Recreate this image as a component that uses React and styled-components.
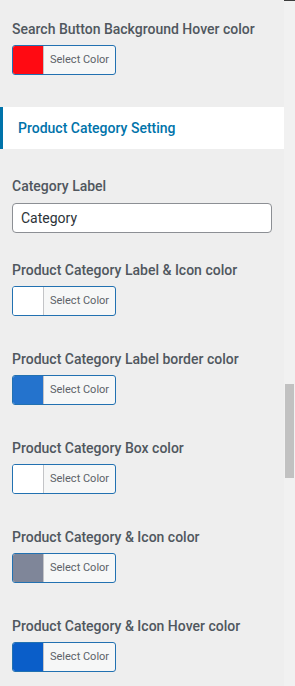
import React from 'react';
import styled, { createGlobalStyle } from 'styled-components';

const GlobalStyle = createGlobalStyle`
  body {
    margin: 0;
    background: #eeeeee;
    font-family: Roboto, "Liberation Sans", sans-serif;
  }
`;

const Layout = styled.div`
  display: flex;
  width: 295px;
  height: 686px;
  overflow: hidden;
`;

const Panel = styled.div`
  width: 284px;
  flex-shrink: 0;
  display: flex;
  flex-direction: column;
  padding-top: 19px;
  background: #eeeeee;
`;

const Gutter = styled.div`
  flex: 1;
  display: flex;
  flex-direction: column;
  align-items: flex-end;
  padding-top: 383px;
  background: #f1f1f1;
  border-top: 1px solid #3c3c3c;
  box-sizing: border-box;
`;

const Thumb = styled.div`
  width: 9px;
  height: 94px;
  margin-right: 1px;
  background: #c1c1c1;
`;

const Group = styled.div`
  display: flex;
  flex-direction: column;
  gap: ${p => p.$gap || 0}px;
  padding: 0 12px;
`;

const Field = styled.div`
  display: flex;
  flex-direction: column;
  gap: ${p => p.$gap || 6}px;
  margin-bottom: ${p => p.$after || 0}px;
`;

const Label = styled.div`
  font-size: 14px;
  line-height: 20px;
  font-weight: 500;
  color: #50575e;
  white-space: nowrap;
`;

const SectionHeading = styled.div`
  height: 42px;
  margin: 32px 0 27px;
  display: flex;
  align-items: center;
  padding-left: 15px;
  padding-bottom: 1px;
  box-sizing: border-box;
  background: #ffffff;
  border-left: 3px solid #0073aa;
  font-size: 14px;
  font-weight: 500;
  color: #0073aa;
`;

const TextInput = styled.input`
  box-sizing: border-box;
  width: 260px;
  height: 30px;
  margin: 0;
  padding: 0 8px;
  border: 1px solid #8c8f94;
  border-radius: 4px;
  background: #ffffff;
  font-family: inherit;
  font-size: 14px;
  color: #2c3338;
  outline: none;
`;

const ColorButton = styled.button`
  box-sizing: border-box;
  display: flex;
  align-items: stretch;
  width: 104px;
  height: 30px;
  padding: 0;
  border: 1px solid #2271b1;
  border-radius: 3px;
  overflow: hidden;
  background: #f6f7f7;
  cursor: pointer;
`;

const Swatch = styled.span`
  width: 30px;
  flex-shrink: 0;
  background: ${p => p.$color};
  border-right: 1px solid #c3c4c7;
`;

const ButtonText = styled.span`
  flex: 1;
  display: flex;
  align-items: center;
  padding-left: 6px;
  padding-bottom: 1px;
  font-family: Roboto, "Liberation Sans", sans-serif;
  font-size: 11px;
  color: #5c6268;
`;

const ColorField = ({ label, color }) => (
  <Field>
    <Label>{label}</Label>
    <ColorButton type="button">
      <Swatch $color={color} />
      <ButtonText>Select Color</ButtonText>
    </ColorButton>
  </Field>
);

const colorFields = [
  { label: 'Product Category Label & Icon color', color: '#ffffff' },
  { label: 'Product Category Label border color', color: '#2473cd' },
  { label: 'Product Category Box color', color: '#ffffff' },
  { label: 'Product Category & Icon color', color: '#7f8699' },
  { label: 'Product Category & Icon Hover color', color: '#0a5ec9' },
];

export default function App() {
  return (
    <Layout>
      <GlobalStyle />
      <Panel>
        <Group>
          <ColorField label="Search Button Background Hover color" color="#ff0a12" />
        </Group>
        <SectionHeading>Product Category Setting</SectionHeading>
        <Group $gap={33}>
          <Field $gap={7} $after={-6}>
            <Label>Category Label</Label>
            <TextInput defaultValue="Category" />
          </Field>
          {colorFields.map(f => (
            <ColorField key={f.label} label={f.label} color={f.color} />
          ))}
        </Group>
      </Panel>
      <Gutter>
        <Thumb />
      </Gutter>
    </Layout>
  );
}
